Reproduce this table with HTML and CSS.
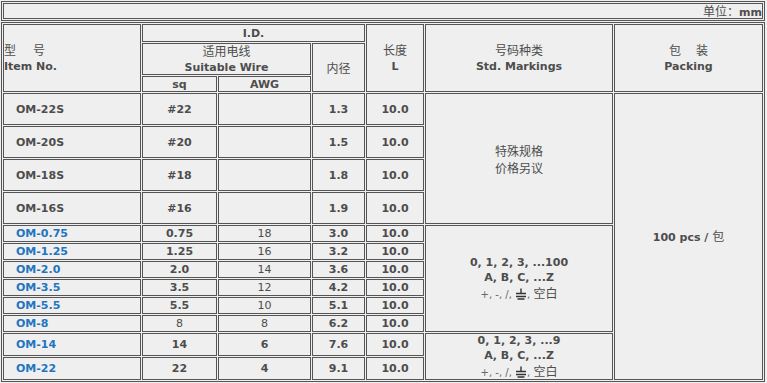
FILE: index.html
```html
<!DOCTYPE html>
<html lang="zh">
<head>
<meta charset="utf-8">
<title>OM 规格表</title>
<link rel="stylesheet" href="styles.css">
</head>
<body>
<div class="sheet">
  <div class="unit"><div class="unit-cell"><span class="zh">单位：</span><b>mm</b></div></div>
  <div class="grid">
    <div class="c left rs3"><div><span class="zh">型<span class="gap"></span>号</span><br><b>Item No.</b></div></div>
    <div class="c cs3 b">I.D.</div>
    <div class="c rs3"><div><span class="zh">长度</span><br><b>L</b></div></div>
    <div class="c rs3"><div><span class="zh">号码种类</span><br><b>Std. Markings</b></div></div>
    <div class="c rs3"><div><span class="zh">包<span class="gap2"></span>装</span><br><b>Packing</b></div></div>
    <div class="c cs2"><div><span class="zh">适用电线</span><br><b>Suitable Wire</b></div></div>
    <div class="c rs2 zh">内径</div>
    <div class="c b">sq</div>
    <div class="c b">AWG</div>

    <div class="c item">OM-22S</div><div class="c b">#22</div><div class="c"></div><div class="c b">1.3</div><div class="c b">10.0</div>
    <div class="c rs4 zh tall">特殊规格<br>价格另议</div>
    <div class="c rs12 pack"><div><b>100 pcs / </b><span class="zh">包</span></div></div>

    <div class="c item">OM-20S</div><div class="c b">#20</div><div class="c"></div><div class="c b">1.5</div><div class="c b">10.0</div>
    <div class="c item">OM-18S</div><div class="c b">#18</div><div class="c"></div><div class="c b">1.8</div><div class="c b">10.0</div>
    <div class="c item">OM-16S</div><div class="c b">#16</div><div class="c"></div><div class="c b">1.9</div><div class="c b">10.0</div>

    <div class="c item blue">OM-0.75</div><div class="c b">0.75</div><div class="c">18</div><div class="c b">3.0</div><div class="c b">10.0</div>
    <div class="c rs6 mark"><div><b>0, 1, 2, 3, ...100</b><br><b>A, B, C, ...Z</b><br><span class="sym">+, -, /, <svg class="gnd" viewBox="0 0 12 12" width="12" height="12" aria-hidden="true"><path d="M6 0.5V5M1 5.5H11M1 8.5H11M2.5 11H9.5" stroke="#333" stroke-width="1.4" fill="none"/></svg>, </span><span class="zh">空白</span></div></div>
    <div class="c item blue">OM-1.25</div><div class="c b">1.25</div><div class="c">16</div><div class="c b">3.2</div><div class="c b">10.0</div>
    <div class="c item blue">OM-2.0</div><div class="c b">2.0</div><div class="c">14</div><div class="c b">3.6</div><div class="c b">10.0</div>
    <div class="c item blue">OM-3.5</div><div class="c b">3.5</div><div class="c">12</div><div class="c b">4.2</div><div class="c b">10.0</div>
    <div class="c item blue">OM-5.5</div><div class="c b">5.5</div><div class="c">10</div><div class="c b">5.1</div><div class="c b">10.0</div>
    <div class="c item blue">OM-8</div><div class="c">8</div><div class="c">8</div><div class="c b">6.2</div><div class="c b">10.0</div>

    <div class="c item blue">OM-14</div><div class="c b">14</div><div class="c b">6</div><div class="c b">7.6</div><div class="c b">10.0</div>
    <div class="c rs2 mark"><div><b>0, 1, 2, 3, ...9</b><br><b>A, B, C, ...Z</b><br><span class="sym">+, -, /, <svg class="gnd" viewBox="0 0 12 12" width="12" height="12" aria-hidden="true"><path d="M6 0.5V5M1 5.5H11M1 8.5H11M2.5 11H9.5" stroke="#333" stroke-width="1.4" fill="none"/></svg>, </span><span class="zh">空白</span></div></div>
    <div class="c item blue">OM-22</div><div class="c b">22</div><div class="c b">4</div><div class="c b">9.1</div><div class="c b">10.0</div>
  </div>
</div>
</body>
</html>
```

FILE: styles.css
```css
html, body {
  margin: 0;
  padding: 0;
  background: #efefef;
}

body {
  font-family: "DejaVu Sans", "Noto Sans CJK SC", sans-serif;
  font-size: 11px;
  color: #4d4d4d;
}

.sheet {
  width: 764px;
  margin: 1px 0 0 1px;
}

.unit {
  border: 1px solid #555;
  padding: 1px;
  margin-bottom: 1px;
}

.unit-cell {
  border: 1px solid #555;
  height: 14px;
  line-height: 14px;
  text-align: right;
  white-space: nowrap;
}

.grid {
  display: grid;
  grid-template-columns: 138px 75px 93px 53px 58px 188px 149px;
  grid-template-rows: 18px 32px 16px repeat(4, 32px) repeat(6, 17px) 23px 23px;
  gap: 1px;
  border: 1px solid #555;
  padding: 1px;
}

.c {
  border: 1px solid #555;
  display: flex;
  align-items: center;
  justify-content: center;
  text-align: center;
  line-height: 15px;
  overflow: hidden;
  white-space: nowrap;
}

.left {
  justify-content: flex-start;
  text-align: left;
}

.item {
  justify-content: flex-start;
  padding-left: 12px;
  font-weight: bold;
}

.blue {
  color: #1f75c0;
}

.b, b {
  font-weight: bold;
}

.zh {
  font-family: "Noto Sans CJK SC", sans-serif;
  font-size: 12px;
  font-weight: normal;
}

.tall {
  line-height: 17px;
}

.gap {
  display: inline-block;
  width: 17px;
}

.gap2 {
  display: inline-block;
  width: 15px;
}

.cs2 { grid-column: span 2; }
.cs3 { grid-column: span 3; }
.rs2 { grid-row: span 2; }
.rs3 { grid-row: span 3; }
.rs4 { grid-row: span 4; }
.rs6 { grid-row: span 6; }
.rs12 { grid-row: span 12; }

.mark {
  line-height: 15px;
}

.sym {
  font-weight: normal;
  font-size: 10px;
  color: #666;
}

.gnd {
  vertical-align: -2px;
}
```
